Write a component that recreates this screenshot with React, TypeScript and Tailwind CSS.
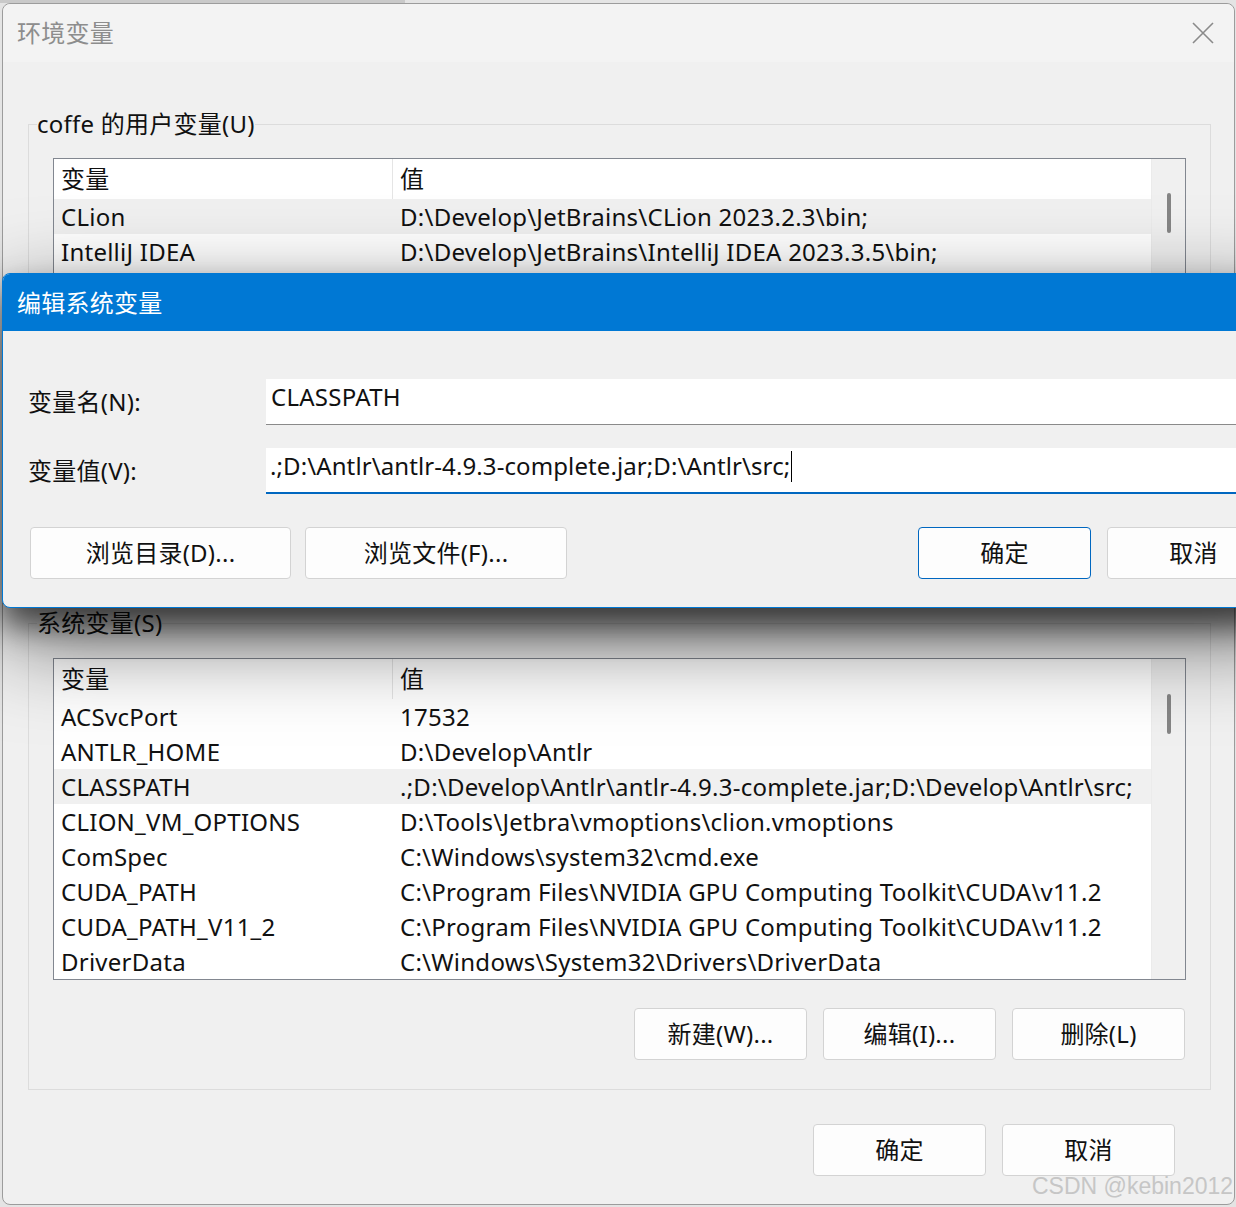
import React from "react";

const FONT = "font-['Noto_Sans','Noto_Sans_CJK_SC',sans-serif]";

type Row = { name: string; value: string };

// only the first two user rows show above the edit dialog
const userRows: Row[] = [
  { name: "CLion", value: "D:\\Develop\\JetBrains\\CLion 2023.2.3\\bin;" },
  { name: "IntelliJ IDEA", value: "D:\\Develop\\JetBrains\\IntelliJ IDEA 2023.3.5\\bin;" },
];

const systemRows: Row[] = [
  { name: "ACSvcPort", value: "17532" },
  { name: "ANTLR_HOME", value: "D:\\Develop\\Antlr" },
  { name: "CLASSPATH", value: ".;D:\\Develop\\Antlr\\antlr-4.9.3-complete.jar;D:\\Develop\\Antlr\\src;" },
  { name: "CLION_VM_OPTIONS", value: "D:\\Tools\\Jetbra\\vmoptions\\clion.vmoptions" },
  { name: "ComSpec", value: "C:\\Windows\\system32\\cmd.exe" },
  { name: "CUDA_PATH", value: "C:\\Program Files\\NVIDIA GPU Computing Toolkit\\CUDA\\v11.2" },
  { name: "CUDA_PATH_V11_2", value: "C:\\Program Files\\NVIDIA GPU Computing Toolkit\\CUDA\\v11.2" },
  { name: "DriverData", value: "C:\\Windows\\System32\\Drivers\\DriverData" },
];

const VarTable = ({ rows, selected, thumbTop }: { rows: Row[]; selected: number; thumbTop: string }) => (
  <div className="mx-[24px] flex h-[322px] border border-[#828790] bg-white">
    <div className="flex flex-1 flex-col overflow-hidden">
      <div className="flex h-[40px] shrink-0">
        <div className="flex w-[339px] items-center border-r border-[#e5e5e5] pl-[7px]">变量</div>
        <div className="flex items-center pl-[7px]">值</div>
      </div>
      {rows.map((row, i) => (
        <div
          key={i}
          className={`flex h-[35px] shrink-0 items-center whitespace-nowrap ${i === selected ? "bg-[#f0f0f0]" : "bg-white"}`}
        >
          <div className="w-[339px] pl-[7px]">{row.name}</div>
          <div className="pl-[7px]">{row.value}</div>
        </div>
      ))}
    </div>
    <div className={`flex w-[34px] justify-center border-l border-[#ebebeb] bg-[#f0f0f0] ${thumbTop}`}>
      <div className="h-[40px] w-[4px] rounded-full bg-[#858585]" />
    </div>
  </div>
);

const Btn = ({ label, w = "w-[173px]", primary = false }: { label: string; w?: string; primary?: boolean }) => (
  <div
    className={`flex h-[52px] shrink-0 items-center justify-center rounded-[4px] border bg-[#fdfdfd] ${w} ${
      primary ? "border-[#0067c0]" : "border-[#d3d3d3]"
    }`}
  >
    {label}
  </div>
);

export default function App() {
  return (
    <div
      className={`relative h-[1207px] w-[1236px] overflow-hidden bg-[#e4e4e4] pl-[2px] pt-[3px] text-[24px] leading-[30px] tracking-[0.25px] text-[#111] ${FONT}`}
    >
      {/* window behind, peeking out at the top */}
      <div className="absolute left-0 top-0 h-[3px] w-[405px] bg-[#c9c9c9]" />

      {/* 环境变量 window */}
      <div className="flex h-[1202px] w-[1233px] flex-col rounded-[8px] border border-[#9c9c9c] bg-[#f0f0f0]">
        <div className="flex h-[58px] shrink-0 items-center justify-between rounded-t-[8px] bg-[#f3f3f3] pl-[14px] pr-[20px]">
          <span className="text-[#8d8d8d]">环境变量</span>
          <svg width="22" height="22" viewBox="0 0 22 22" fill="none" stroke="#8a8a8a" strokeWidth="1.6">
            <path d="M1 1L21 21M21 1L1 21" />
          </svg>
        </div>

        <fieldset className="ml-[25px] mt-[47px] h-[440px] w-[1183px] shrink-0 border border-[#dcdcdc]">
          <legend className="ml-[8px] h-[30px]">coffe 的用户变量(U)</legend>
          <div className="mt-[19px]">
            <VarTable rows={userRows} selected={0} thumbTop="pt-[34px]" />
          </div>
        </fieldset>

        <fieldset className="ml-[25px] mt-[59px] w-[1183px] shrink-0 border border-[#dcdcdc]">
          <legend className="ml-[8px] h-[30px]">系统变量(S)</legend>
          <div className="mt-[20px]">
            <VarTable rows={systemRows} selected={2} thumbTop="pt-[35px]" />
          </div>
          <div className="mr-[25px] mt-[28px] flex justify-end gap-[16px] pb-[29px]">
            <Btn label="新建(W)..." />
            <Btn label="编辑(I)..." />
            <Btn label="删除(L)" />
          </div>
        </fieldset>

        <div className="mr-[59px] mt-[34px] flex justify-end gap-[16px]">
          <Btn label="确定" />
          <Btn label="取消" />
        </div>
      </div>

      {/* 编辑系统变量 dialog on top */}
      <div className="absolute left-[2px] top-[273px] flex h-[335px] w-[1300px] flex-col overflow-hidden rounded-[8px] border border-[#0078d4] bg-[#f0f0f0] shadow-[0_18px_30px_rgba(0,0,0,0.55),0_30px_90px_rgba(0,0,0,0.6)]">
        <div className="flex h-[57px] shrink-0 items-center bg-[#0078d4] pl-[14px] text-white">编辑系统变量</div>

        <div className="mt-[48px] flex items-center pl-[25px]">
          <div className="w-[238px]">变量名(N):</div>
          <div className="flex h-[46px] flex-1 items-center border-b border-[#8a8a8a] bg-white pb-[9px] pl-[5px]">CLASSPATH</div>
        </div>
        <div className="mt-[23px] flex items-center pl-[25px]">
          <div className="w-[238px]">变量值(V):</div>
          <div className="flex h-[46px] flex-1 items-center border-b-2 border-[#0067c0] bg-white pb-[8px] pl-[4px]">
            <span className="whitespace-nowrap tracking-[0.1px]">.;D:\Antlr\antlr-4.9.3-complete.jar;D:\Antlr\src;</span>
            <span className="ml-[1px] h-[31px] w-[1px] bg-black" />
          </div>
        </div>

        <div className="mt-[33px] flex pl-[27px]">
          <Btn label="浏览目录(D)..." w="w-[261px]" />
          <div className="ml-[14px]">
            <Btn label="浏览文件(F)..." w="w-[262px]" />
          </div>
          <div className="ml-[351px] flex gap-[16px]">
            <Btn label="确定" primary />
            <Btn label="取消" />
          </div>
        </div>
      </div>

      <div className="absolute left-[1032px] top-[1175px] whitespace-nowrap font-['Liberation_Sans',sans-serif] text-[23px] leading-none tracking-normal text-[#c6c6c6]">
        CSDN @kebin2012
      </div>
    </div>
  );
}
